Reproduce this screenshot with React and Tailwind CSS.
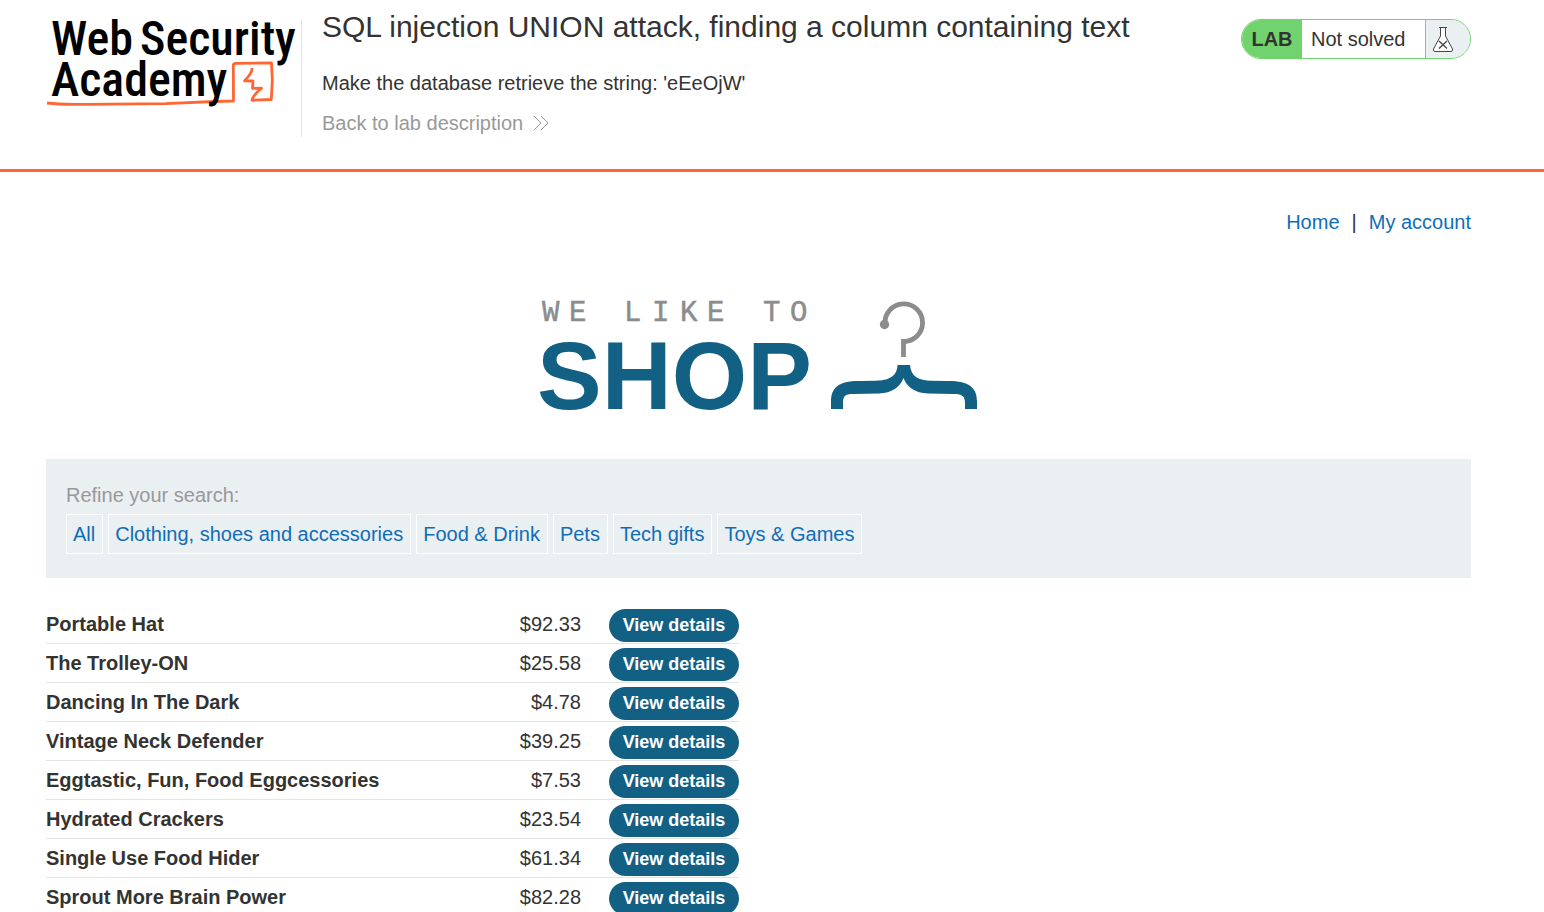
const categories = [
  "All",
  "Clothing, shoes and accessories",
  "Food & Drink",
  "Pets",
  "Tech gifts",
  "Toys & Games",
];

const products = [
  { name: "Portable Hat", price: "$92.33" },
  { name: "The Trolley-ON", price: "$25.58" },
  { name: "Dancing In The Dark", price: "$4.78" },
  { name: "Vintage Neck Defender", price: "$39.25" },
  { name: "Eggtastic, Fun, Food Eggcessories", price: "$7.53" },
  { name: "Hydrated Crackers", price: "$23.54" },
  { name: "Single Use Food Hider", price: "$61.34" },
  { name: "Sprout More Brain Power", price: "$82.28" },
];

function AcademyLogo() {
  return (
    <svg
      width="250"
      height="92"
      viewBox="0 0 250 92"
      overflow="visible"
      role="img"
      aria-label="Web Security Academy"
    >
      <path
        d="M1 84 C12 85.500 24 85.600 38 85.300 L120 84.600 L168 82.500 L187.500 82 L187.300 46 Q187.500 44.500 190 44.300 L225.500 44 L226.300 61 L225.300 80.500 L206 81.300 C206.500 77 211 73 215.500 69.200 L206.500 69.300 L207 62 L198.500 61.800 C202 57.500 206.500 55 206 49"
        fill="none"
        stroke="#ff6633"
        strokeWidth="2.800"
        strokeLinejoin="round"
      />
      <g fill="#000" fontFamily="'Roboto Condensed', Roboto, sans-serif" fontSize="48" fontWeight="500">
        <text x="5" y="36">Web</text>
        <text x="94" y="36">Security</text>
        <text x="5" y="77">Academy</text>
      </g>
    </svg>
  );
}

function DoubleChevron() {
  return (
    <svg width="16" height="16" viewBox="0 0 16 16" fill="none" stroke="#999" strokeWidth="1" aria-hidden="true">
      <path d="M1 1 L8 8 L1 15 M8 1 L15 8 L8 15" />
    </svg>
  );
}

function Flask() {
  return (
    <svg width="22" height="26" viewBox="0 0 22 26" fill="none" stroke="#444" strokeWidth="1" aria-hidden="true">
      <path d="M8.500 1.500 V10 L1.500 23 Q1 25.500 3 25.500 H19 Q21 25.500 20.500 23 L13.500 10 V1.500 Z" fill="#fff" />
      <path d="M7 1.500 H15" />
      <path d="M7 15 L15 22.500 M15 15 L7 22.500" strokeWidth="1.300" />
    </svg>
  );
}

function ShopLogo() {
  return (
    <svg width="438" height="112" viewBox="0 0 438 112" overflow="visible" role="img" aria-label="We like to shop">
      <text
        x="2 29 57 84 112 140 167 195 223 250"
        y="21"
        fill="#8c8c8d"
        stroke="#8c8c8d"
        strokeWidth="0.500"
        fontFamily="'Liberation Mono', 'Courier New', monospace"
        fontSize="29"
      >
        WE LIKE TO
      </text>
      <text
        x="-3"
        y="109"
        fill="#126084"
        fontFamily="'Liberation Sans', Arial, sans-serif"
        fontSize="97"
        fontWeight="700"
      >
        SHOP
      </text>
      <circle cx="344.500" cy="24.500" r="4.700" fill="#8c8c8d" />
      <path d="M345 24 A18.800 18.800 0 1 1 363.500 41.500 V57" fill="none" stroke="#8c8c8d" strokeWidth="4.800" />
      <path
        d="M357.500 65 H370 C371 77 379 80.500 391 80.700 L408 81 C430 81 437 88 437 102 V109 H425 V103 C425 96 422 94 414 94 L388 93.500 C375 93 367 87 363.500 78 C360 87 352 93 339 93.500 L313 94 C305 94 303 96 303 103 V109 H291 V102 C291 88 298 81 319 81 L336 80.700 C348 80.500 357 77 357.500 65 Z"
        fill="#126084"
      />
    </svg>
  );
}

export default function App() {
  return (
    <div className="bg-white font-['Liberation_Sans',Arial,sans-serif] text-xl leading-6 text-[#333332]">
      <header className="flex items-start border-b-3 border-[#ff6633] pr-[73px] pb-8 pl-[46px]">
        <div className="mt-[19px] h-[118px] w-64 shrink-0 border-r border-[#e3e3e4]">
          <AcademyLogo />
        </div>
        <div className="grow pt-[9px] pl-5">
          <h1 className="text-[30px] leading-9">
            SQL injection UNION attack, finding a column containing text
          </h1>
          <p className="mt-[26px]">Make the database retrieve the string: &apos;eEeOjW&apos;</p>
          <a href="#description" className="mt-4 inline-flex items-center gap-2.5 text-[#999]">
            Back to lab description
            <DoubleChevron />
          </a>
        </div>
        <div className="mt-[19px] flex h-10 w-[230px] shrink-0 overflow-hidden rounded-[20px] border border-[#71d36d]">
          <span className="flex w-15 items-center justify-center bg-[#71d36d] font-bold">LAB</span>
          <span className="grow pt-[7px] pl-[9px]">Not solved</span>
          <span className="flex w-[45px] items-center border-l border-[#71d36d] bg-[#eaeff2] pl-1.5">
            <Flask />
          </span>
        </div>
      </header>

      <main className="pr-[73px] pl-[46px]">
        <nav className="flex justify-end gap-3 pt-[38px]">
          <a href="#home" className="text-[#0f6db8]">Home</a>
          <span>|</span>
          <a href="#account" className="text-[#0f6db8]">My account</a>
        </nav>

        <div className="mt-[66px] flex justify-center">
          <ShopLogo />
        </div>

        <section className="mt-[47px] bg-[#eaeff2] px-5 pt-6 pb-6">
          <p className="text-[#999]">Refine your search:</p>
          <div className="mt-[7px] flex flex-wrap gap-[5px]">
            {categories.map((category) => (
              <a
                key={category}
                href="#filter"
                className="flex h-10 items-center border border-white pr-[7px] pl-1.5 text-[#0f6db8]"
              >
                {category}
              </a>
            ))}
          </div>
        </section>

        <table className="mt-[27px] w-[693px] border-separate border-spacing-0">
          <tbody>
            {products.map((product) => (
              <tr key={product.name} className="h-[39px]">
                <th scope="row" className="border-b border-[#e3e3e4] p-0 text-left font-bold">
                  {product.name}
                </th>
                <td className="border-b border-[#e3e3e4] p-0 pr-7 text-right">{product.price}</td>
                <td className="w-[130px] border-b border-[#e3e3e4] p-0 pt-[3px]">
                  <a
                    href="#product"
                    className="flex h-[33px] items-center justify-center rounded-full bg-[#126084] pb-0.5 text-lg font-bold text-white"
                  >
                    View details
                  </a>
                </td>
              </tr>
            ))}
          </tbody>
        </table>
      </main>
    </div>
  );
}
